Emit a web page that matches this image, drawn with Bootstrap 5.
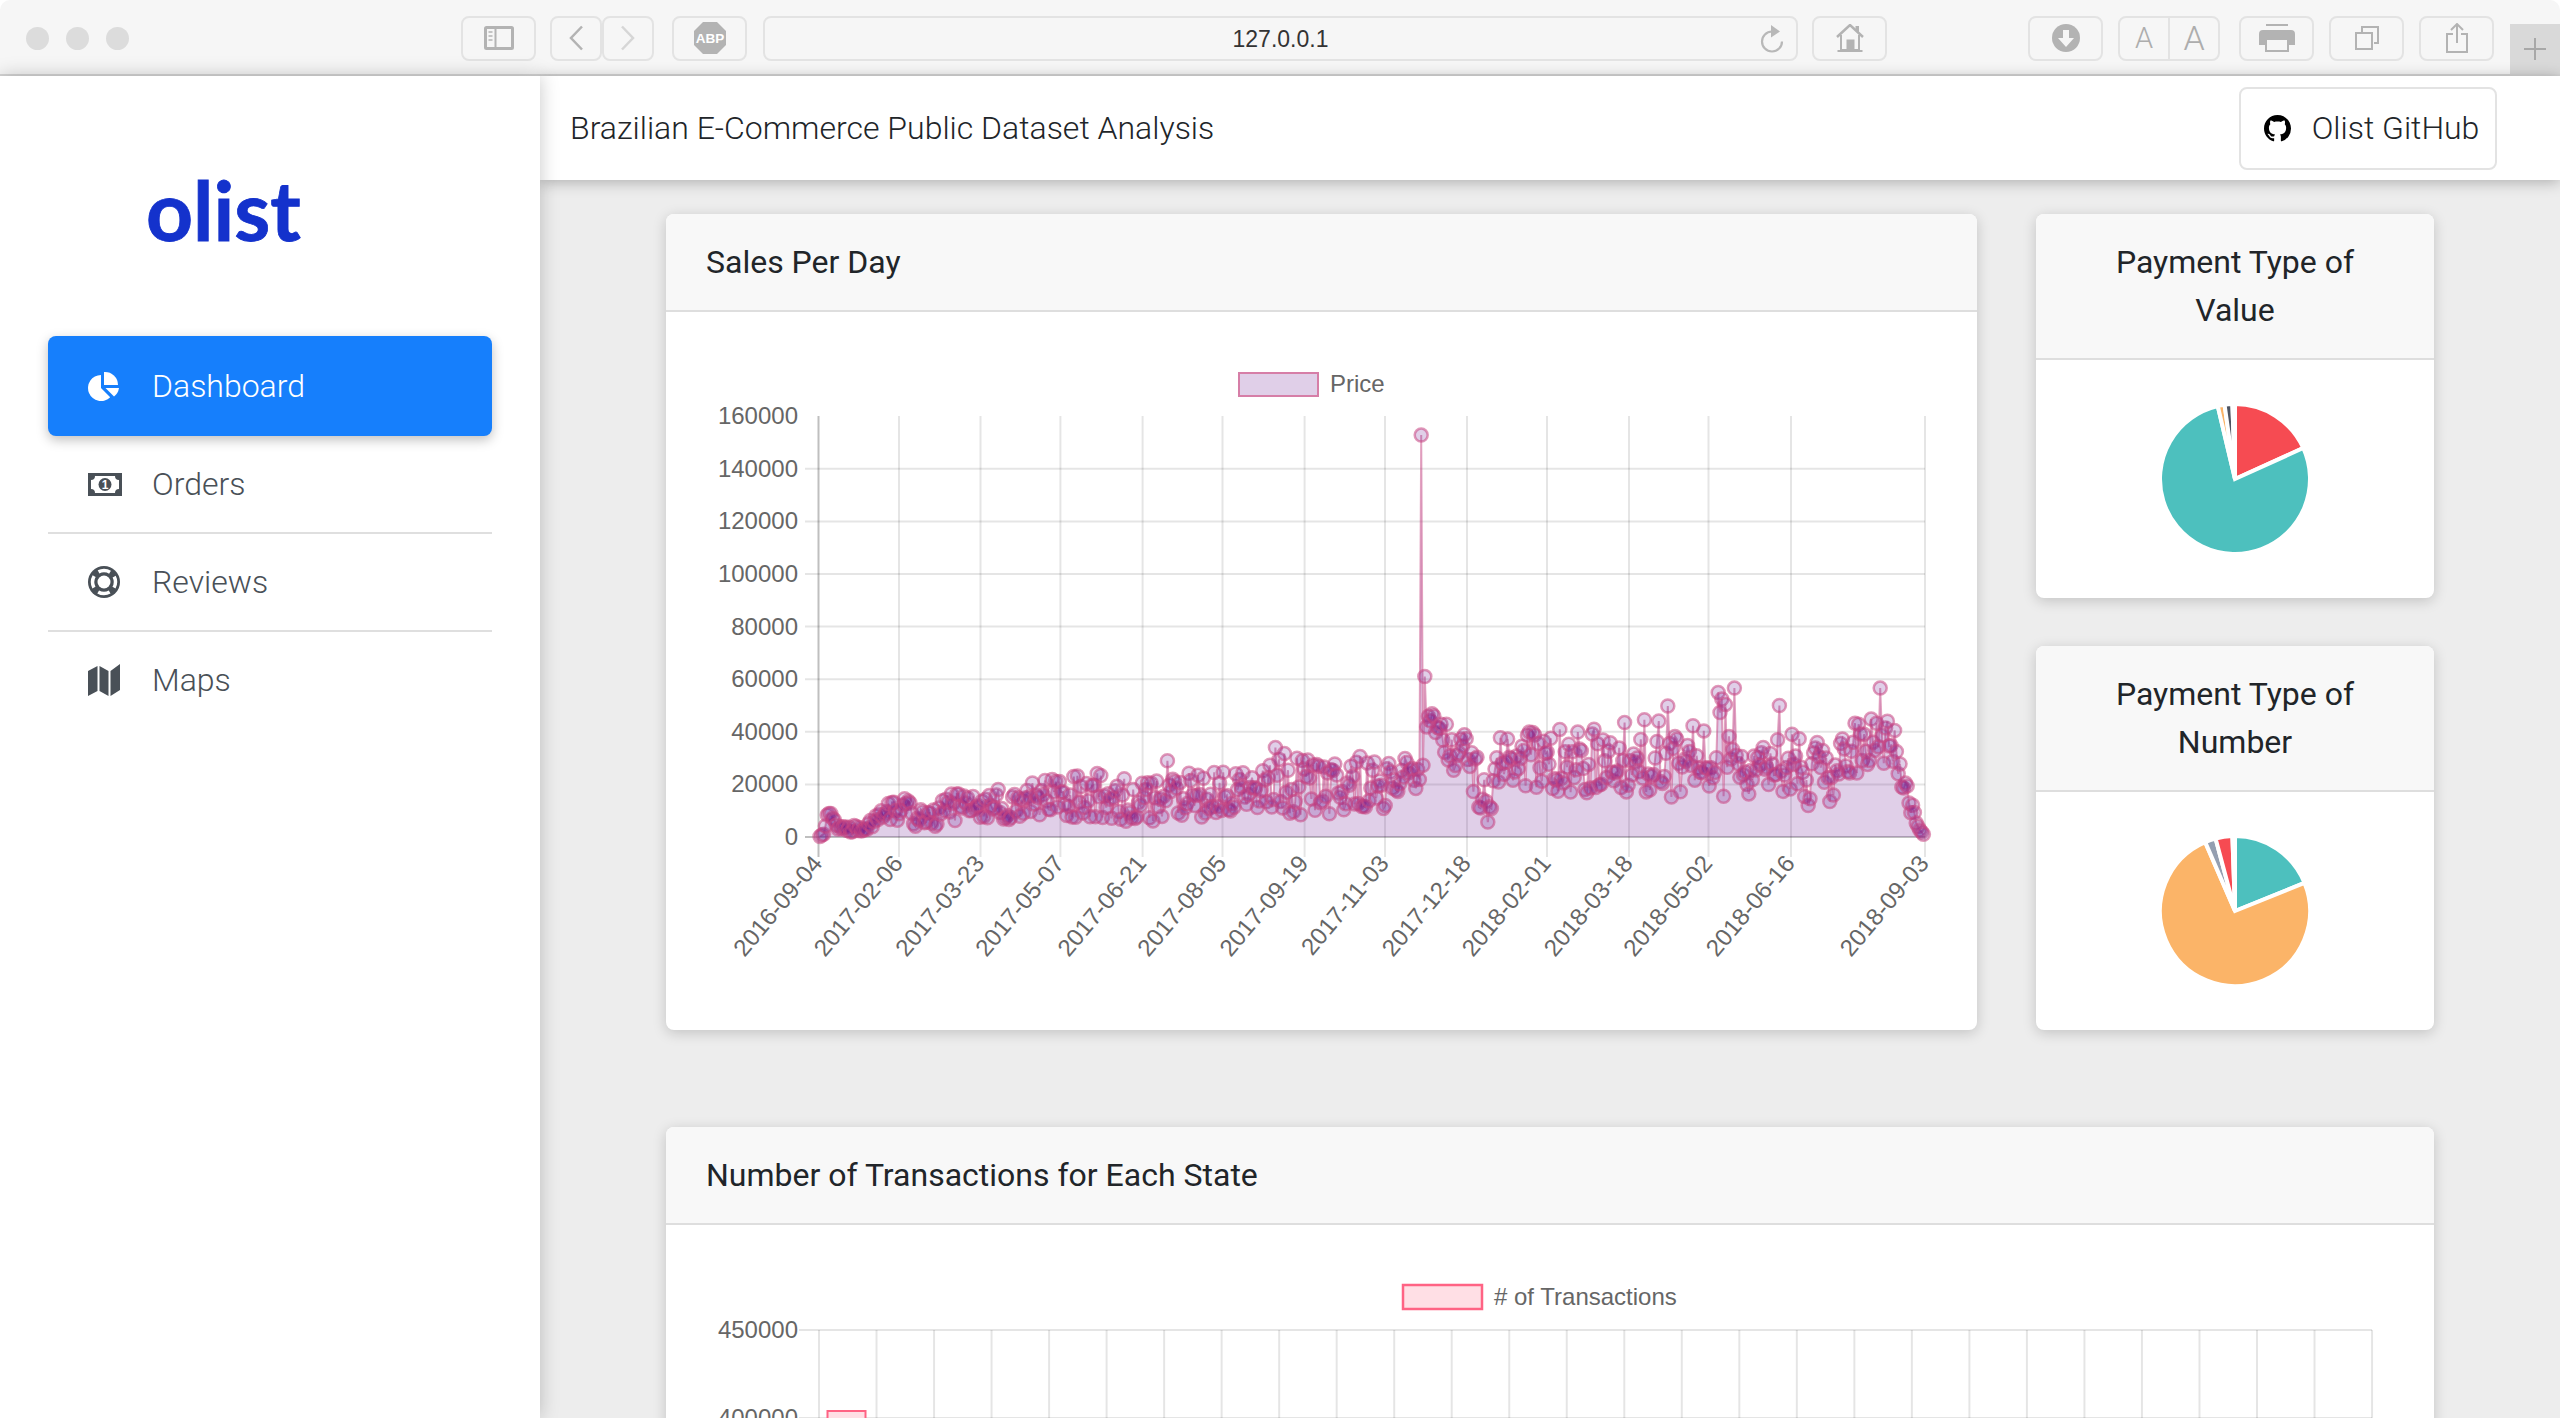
<!DOCTYPE html>
<html lang="en">
<head>
    <meta charset="UTF-8">
    <title>Olist Dashboard</title>
    <link href="https://cdn.jsdelivr.net/npm/bootstrap@5.3.3/dist/css/bootstrap.min.css" rel="stylesheet">
    <style>
        html, body { height: 100%; overflow: hidden; }
        body { background: #fff; font-family: Roboto, "Liberation Sans", sans-serif; color: #212529; }

        /* safari toolbar */
        .browser-bar { height: 76px; background: #f6f6f6; border-bottom: 2px solid #d6d6d6; border-radius: 10px 10px 0 0; padding-top: 2px; }
        .traffic { width: 23px; height: 23px; border-radius: 50%; background: #dcdcdc; margin-right: 17px; }
        .traffic:first-child { margin-left: 26px; }
        .tb-btn { width: 75px; height: 45px; border: 2px solid #e3e3e3; border-radius: 8px; flex: none; }
        .tb-nav { width: 52px; }
        .tb-aa { width: 102px; font-weight: 300; color: #adadad; }
        .tb-aa span { flex: 1; text-align: center; line-height: 41px; }
        .tb-aa span + span { border-left: 2px solid #e3e3e3; font-size: 34px; }
        .tb-aa span:first-child { font-size: 29px; }
        .tb-url { flex: 1; font: 23px "Liberation Sans", sans-serif; color: #333; padding-top: 2px; }
        .tb-reload { right: 12px; top: 7px; }
        .tb-plus { width: 50px; height: 50px; background: #d9d9d9; align-self: flex-end; flex: none; margin-left: 16px; }
        .ml-332 { margin-left: 315px; }
        .ml-14 { margin-left: 14px; }
        .ml-15 { margin-left: 15px; }
        .ml-16 { margin-left: 16px; }
        .ml-18 { margin-left: 18px; }
        .ml-19 { margin-left: 19px; }
        .ml-141 { margin-left: 141px; }

        /* sidebar */
        .app-wrap { height: calc(100% - 76px); }
        .side-panel { width: 540px; flex: none; background: #fff; box-shadow: 0 0 18px rgba(0, 0, 0, .22); z-index: 3; }
        .olist-logo { font: 700 82px/1 Lato, sans-serif; color: #1432cc; -webkit-text-stroke: .8px #1432cc; padding: 92px 0 0 146px; margin-bottom: 86px; }
        .side-nav { margin: 0 48px; }
        .side-nav .nav-link { height: 98px; padding: 0 0 0 40px; color: #495057; font-size: 32px; font-weight: 300; border-bottom: 2px solid #dfdfdf; }
        .side-nav .nav-item:last-child .nav-link { height: 96px; border-bottom: 0; }
        .side-nav .nav-link.active { height: 100px; background: #167ffc; color: #fff; border: 0; border-radius: 8px; box-shadow: 0 4px 12px rgba(0, 0, 0, .25); }
        .side-icon { width: 64px; flex: none; display: flex; align-items: center; }

        /* top bar */
        .main-area { min-width: 0; background: #ededed; }
        .top-bar { height: 104px; background: #fff; box-shadow: 0 2px 14px rgba(0, 0, 0, .28); padding: 0 63px 0 30px; z-index: 2; font-size: 32px; font-weight: 300; flex: none; }
        .github-btn { height: 83px; width: 258px; padding: 0 0 0 7px; border: 2px solid #e3e3e3; border-radius: 8px; font-size: 32px; font-weight: 300; color: #212529; gap: 21px; }

        /* cards */
        .content-area { padding: 34px 126px 0 126px; }
        .stat-card { border: 0; border-radius: 8px; box-shadow: 0 3px 14px rgba(0, 0, 0, .18); overflow: hidden; font-size: 32px; line-height: 48px; }
        .stat-card .card-header { padding: 24px 40px; background: #f8f8f8; border-bottom: 2px solid #dedede; border-radius: 0; }
        .stat-card .card-body { padding: 0; }
        .side-cards { width: 398px; flex: none; gap: 48px; }
        .main-row { gap: 59px; margin-bottom: 97px; }
        .stat-card svg { display: block; }
        .chart-label { font: 24px "Liberation Sans", sans-serif; fill: #666; }
    </style>
</head>
<body>

<div class="browser-bar d-flex align-items-center">
    <div class="traffic"></div>
    <div class="traffic"></div>
    <div class="traffic"></div>

    <div class="tb-btn ml-332 d-flex align-items-center justify-content-center">
        <svg width="30" height="24" viewBox="0 0 30 24"><rect x="1.5" y="1.5" width="27" height="21" fill="none" stroke="#b3b3b3" stroke-width="3" rx="1"/><path d="M11.5 1v22" stroke="#b3b3b3" stroke-width="2"/><path d="M4.5 6h4M4.5 10h4M4.5 14h4" stroke="#c4c4c4" stroke-width="2"/></svg>
    </div>
    <div class="tb-btn tb-nav ml-14 d-flex align-items-center justify-content-center">
        <svg width="16" height="26" viewBox="0 0 16 26"><path d="M14 1.5 3 13l11 11.5" fill="none" stroke="#b3b3b3" stroke-width="2.5"/></svg>
    </div>
    <div class="tb-btn tb-nav d-flex align-items-center justify-content-center">
        <svg width="16" height="26" viewBox="0 0 16 26"><path d="M2 1.5 13 13 2 24.500" fill="none" stroke="#d6d6d6" stroke-width="2.500"/></svg>
    </div>
    <div class="tb-btn ml-18 d-flex align-items-center justify-content-center">
        <svg width="34" height="34" viewBox="0 0 34 34"><path d="M10 1h14l9 9v14l-9 9H10l-9-9V10z" fill="#b3b3b3"/><text x="17" y="22" text-anchor="middle" font-family="Liberation Sans" font-weight="700" font-size="13.500" fill="#fff">ABP</text></svg>
    </div>
    <div class="tb-btn tb-url ml-16 position-relative d-flex align-items-center justify-content-center">
        127.0.0.1
        <svg class="tb-reload position-absolute" width="24" height="28" viewBox="0 0 24 28"><path d="M12 6.500a10 10 0 1 0 10 10" fill="none" stroke="#b8b8b8" stroke-width="2.200"/><path d="M11 0l9 6.500-9 6z" fill="#b8b8b8"/></svg>
    </div>
    <div class="tb-btn ml-14 d-flex align-items-center justify-content-center">
        <svg width="28" height="28" viewBox="0 0 28 28"><path d="M1 13 14 1l13 12" fill="none" stroke="#b3b3b3" stroke-width="2.500"/><path d="M19.500 2h3.500v7l-3.500-3z" fill="#b3b3b3"/><path d="M5 11v15h18V11" fill="none" stroke="#b3b3b3" stroke-width="2"/><path d="M10.500 15.500h8V26h-8z" fill="#b3b3b3"/><path d="M1.500 27h25" stroke="#b3b3b3" stroke-width="2"/></svg>
    </div>
    <div class="tb-btn ml-141 d-flex align-items-center justify-content-center">
        <svg width="28" height="28" viewBox="0 0 28 28"><circle cx="14" cy="14" r="14" fill="#b3b3b3"/><path d="M11 6h6v8h5l-8 9-8-9h5z" fill="#f6f6f6"/></svg>
    </div>
    <div class="tb-btn tb-aa ml-15 d-flex">
        <span>A</span><span>A</span>
    </div>
    <div class="tb-btn ml-19 d-flex align-items-center justify-content-center">
        <svg width="36" height="28" viewBox="0 0 36 28"><path d="M7 1h22" stroke="#b3b3b3" stroke-width="2"/><path d="M4 6h28a4 4 0 0 1 4 4v11h-7v-6H7v6H0V10a4 4 0 0 1 4-4z" fill="#b3b3b3"/><path d="M7 15h22v12H7z" fill="none" stroke="#b3b3b3" stroke-width="2"/></svg>
    </div>
    <div class="tb-btn ml-15 d-flex align-items-center justify-content-center">
        <svg width="24" height="24" viewBox="0 0 24 24"><path d="M1 7h16v16H1z" fill="none" stroke="#b3b3b3" stroke-width="2"/><path d="M7 6V1h16v16h-4" fill="none" stroke="#b3b3b3" stroke-width="2"/></svg>
    </div>
    <div class="tb-btn ml-15 d-flex align-items-center justify-content-center">
        <svg width="22" height="30" viewBox="0 0 22 30"><path d="M7 11H1v18h20V11h-6" fill="none" stroke="#b3b3b3" stroke-width="2"/><path d="M11 20V2M5 7l6-6 6 6" fill="none" stroke="#b3b3b3" stroke-width="2"/></svg>
    </div>
    <div class="tb-plus d-flex align-items-center justify-content-center">
        <svg width="24" height="24" viewBox="0 0 24 24"><path d="M12 1v22M1 12h22" stroke="#a8a8a8" stroke-width="2"/></svg>
    </div>
</div>

<div class="app-wrap d-flex">
    <div class="side-panel">
        <div class="olist-logo">olist</div>
        <ul class="nav flex-column side-nav">
            <li class="nav-item">
                <a class="nav-link active d-flex align-items-center" href="#">
                    <span class="side-icon"><svg width="32" height="30" viewBox="0 0 32 30" fill="#fff"><path d="M13 4v13l9.200 9.200A13 13 0 1 1 13 4z"/><path d="M16 1a13 13 0 0 1 14 13H16z"/><path d="M31 17a13 13 0 0 1-5 8.500L17.500 17z"/></svg></span>
                    Dashboard
                </a>
            </li>
            <li class="nav-item">
                <a class="nav-link d-flex align-items-center" href="#">
                    <span class="side-icon"><svg width="34" height="23" viewBox="0 0 34 23"><rect width="34" height="23" fill="#495057"/><path d="M7 3h20a4 4 0 0 0 4 4v9a4 4 0 0 0-4 4H7a4 4 0 0 0-4-4V7a4 4 0 0 0 4-4z" fill="#fff"/><circle cx="17" cy="11.500" r="6.500" fill="#495057"/><text x="17" y="16" text-anchor="middle" font-family="Liberation Sans" font-weight="700" font-size="12" fill="#fff">1</text></svg></span>
                    Orders
                </a>
            </li>
            <li class="nav-item">
                <a class="nav-link d-flex align-items-center" href="#">
                    <span class="side-icon"><svg width="32" height="32" viewBox="0 0 32 32"><circle cx="16" cy="16" r="16" fill="#495057"/><circle cx="16" cy="16" r="6.500" fill="#fff"/><circle cx="16" cy="16" r="11.500" fill="none" stroke="#fff" stroke-width="3.500" stroke-dasharray="12 6.060" stroke-dashoffset="6"/></svg></span>
                    Reviews
                </a>
            </li>
            <li class="nav-item">
                <a class="nav-link d-flex align-items-center" href="#">
                    <span class="side-icon"><svg width="32" height="32" viewBox="0 0 32 32" fill="#495057"><path d="M0 7l9.500-5v25L0 32zM11.500 2l9 5v25l-9-5zM22.500 7L32 0v26l-9.500 6z"/></svg></span>
                    Maps
                </a>
            </li>
        </ul>
    </div>

    <div class="main-area flex-grow-1 d-flex flex-column">
        <nav class="navbar top-bar">
            <span>Brazilian E-Commerce Public Dataset Analysis</span>
            <a class="btn github-btn d-flex align-items-center justify-content-center" href="#">
                <svg width="27" height="27" viewBox="0 0 16 16" fill="#000"><path d="M8 0C3.580 0 0 3.580 0 8c0 3.540 2.290 6.530 5.470 7.590.4.070.55-.17.55-.38 0-.19-.01-.82-.01-1.490-2.010.37-2.530-.49-2.690-.94-.09-.23-.48-.94-.82-1.130-.28-.15-.68-.52-.01-.53.63-.01 1.080.58 1.230.82.72 1.210 1.870.87 2.330.66.07-.52.28-.87.51-1.070-1.780-.2-3.640-.89-3.640-3.950 0-.87.31-1.590.82-2.150-.08-.2-.36-1.020.08-2.120 0 0 .67-.21 2.200.82.64-.18 1.320-.27 2-.27.68 0 1.360.09 2 .27 1.530-1.040 2.200-.82 2.200-.82.44 1.100.16 1.920.08 2.120.51.56.82 1.270.82 2.150 0 3.070-1.870 3.750-3.650 3.950.29.25.54.73.54 1.480 0 1.070-.01 1.930-.01 2.200 0 .21.15.46.55.38A8.013 8.013 0 0016 8c0-4.420-3.580-8-8-8z"/></svg>
                Olist GitHub
            </a>
        </nav>

        <div class="content-area">
            <div class="main-row d-flex">
                <div class="card stat-card flex-grow-1">
                    <div class="card-header">Sales Per Day</div>
                    <div class="card-body">
                        <svg id="salesChart" width="1311" height="716" viewBox="666 312 1311 716"></svg>
                    </div>
                </div>
                <div class="side-cards d-flex flex-column">
                    <div class="card stat-card">
                        <div class="card-header text-center">Payment Type of Value</div>
                        <div class="card-body">
                            <svg id="pieValue" width="398" height="238" viewBox="-199 -119 398 238"></svg>
                        </div>
                    </div>
                    <div class="card stat-card">
                        <div class="card-header text-center">Payment Type of Number</div>
                        <div class="card-body">
                            <svg id="pieNumber" width="398" height="238" viewBox="-199 -119 398 238"></svg>
                        </div>
                    </div>
                </div>
            </div>

            <div class="card stat-card">
                <div class="card-header">Number of Transactions for Each State</div>
                <div class="card-body">
                    <svg id="stateChart" width="1768" height="300" viewBox="666 1224 1768 300"></svg>
                </div>
            </div>
        </div>
    </div>
</div>

<script src="https://cdn.jsdelivr.net/npm/bootstrap@5.3.3/dist/js/bootstrap.bundle.min.js"></script>
<script>
    const GRID = 'rgba(0,0,0,.1)';
    const AXIS = 'rgba(0,0,0,.25)';

    // simple seeded random so the drawing stays the same on every run
    let seed = 4711;
    function rnd() {
        seed = (seed * 16807) % 2147483647;
        return seed / 2147483647;
    }

    // [x in px, middle value, spread]
    const shape = [[820,300,100],[824,1000,500],[828,9000,1500],[834,8000,1500],[838,2500,1500],[860,3000,2000],[872,5000,3000],
        [885,10000,4500],[905,11000,5000],[915,7000,3500],[935,7000,3500],[945,11000,5000],[990,13000,6000],[1020,12000,7000],
        [1060,16000,8000],[1100,15500,9000],[1140,13000,8000],[1180,15500,9000],[1260,18000,9000],[1270,20000,12000],[1320,20000,12000],
        [1380,20000,10000],[1415,23000,7000],[1420,28000,9000],[1430,46000,3000],[1450,35000,9000],[1470,28000,9000],[1480,19000,9000],
        [1488,11000,6000],[1491,15000,6000],[1493,25000,9000],[1500,32000,10000],[1550,29000,12000],[1600,28000,14000],[1640,31000,15000],
        [1690,31000,17000],[1725,34000,20000],[1735,28000,15000],[1745,18000,7000],[1755,25000,7000],[1780,27000,12000],[1790,28000,14000],
        [1810,22000,13000],[1830,25000,13000],[1850,33000,11000],[1880,38000,9000],[1895,32000,9000],[1902,24000,7000],[1910,12000,4000],
        [1918,5000,2000],[1925,200,100]];

    // points that stick out in the picture
    const peaks = {1422: 152800, 1424: 61000, 1668: 49800, 1718: 55000, 1734: 56600, 1780: 50000, 1881: 56600, 1276: 34000, 1168: 29000};

    function lookup(x) {
        for (let i = 1; i < shape.length; i++) {
            if (x <= shape[i][0]) {
                const a = shape[i - 1], b = shape[i];
                const t = (x - a[0]) / (b[0] - a[0]);
                return [a[1] + (b[1] - a[1]) * t, a[2] + (b[2] - a[2]) * t];
            }
        }
        return [0, 0];
    }

    function drawSales() {
        const base = 837, perUnit = 52.6 / 20000;
        const pts = [];
        for (let x = 820; x <= 1925; x += 1.8) {
            const [mid, spread] = lookup(x);
            let val = Math.max(0, mid + spread * (rnd() * 2 - 1));
            for (const px in peaks) {
                if (Math.abs(x - px) < 0.9) val = peaks[px];
            }
            pts.push([x, base - val * perUnit]);
        }

        let out = '';
        const yLabels = [160000, 140000, 120000, 100000, 80000, 60000, 40000, 20000, 0];
        yLabels.forEach(v => {
            const y = base - v * perUnit;
            if (v > 0 && v < 160000) out += `<path d="M805 ${y}H1925" stroke="${GRID}" stroke-width="2"/>`;
            out += `<text class="chart-label" x="798" y="${y + 8}" text-anchor="end">${v}</text>`;
        });
        out += `<path d="M805 ${base}H1925" stroke="${AXIS}" stroke-width="2"/>`;

        const ticks = [[818.5,'2016-09-04'],[899,'2017-02-06'],[980.5,'2017-03-23'],[1060.4,'2017-05-07'],[1142.6,'2017-06-21'],
            [1222.5,'2017-08-05'],[1304.6,'2017-09-19'],[1385,'2017-11-03'],[1467,'2017-12-18'],[1547,'2018-02-01'],
            [1629,'2018-03-18'],[1708.5,'2018-05-02'],[1791,'2018-06-16'],[1925,'2018-09-03']];
        ticks.forEach(([x, label], i) => {
            out += `<path d="M${x} 416V857" stroke="${i === 0 ? AXIS : GRID}" stroke-width="2"/>`;
            out += `<text class="chart-label" text-anchor="end" transform="translate(${x + 5} 864) rotate(-50)">${label}</text>`;
        });

        // legend
        out += `<rect x="1239" y="373" width="79" height="23" fill="rgba(102,16,142,.2)" stroke="#d67ea7" stroke-width="2"/>`;
        out += `<text class="chart-label" x="1330" y="392">Price</text>`;

        // area, line, points
        const line = pts.map(p => p[0].toFixed(1) + ' ' + p[1].toFixed(1)).join('L');
        out += `<path d="M${line}L1925 ${base}L820 ${base}Z" fill="rgba(102,16,142,.2)"/>`;
        out += `<path d="M${line}" fill="none" stroke="rgba(200,70,130,.5)" stroke-width="2"/>`;
        pts.forEach(p => {
            out += `<circle cx="${p[0].toFixed(1)}" cy="${p[1].toFixed(1)}" r="6.500" fill="rgba(102,16,142,.2)" stroke="rgba(200,70,130,.55)" stroke-width="2.500"/>`;
        });
        document.getElementById('salesChart').innerHTML = out;
    }

    function drawPie(id, slices) {
        const r = 75;
        let out = '';
        slices.forEach(([from, to, color]) => {
            const a = (from - 90) * Math.PI / 180, b = (to - 90) * Math.PI / 180;
            const large = to - from > 180 ? 1 : 0;
            out += `<path d="M0 0L${r * Math.cos(a)} ${r * Math.sin(a)}A${r} ${r} 0 ${large} 1 ${r * Math.cos(b)} ${r * Math.sin(b)}Z" fill="${color}" stroke="#fff" stroke-width="4"/>`;
        });
        document.getElementById(id).innerHTML = out;
    }

    function drawStates() {
        let out = '';
        [[450000, 1329], [400000, 1417]].forEach(([v, y]) => {
            out += `<path d="M799 ${y}H2372" stroke="${GRID}" stroke-width="2"/>`;
            out += `<text class="chart-label" x="798" y="${y + 8}" text-anchor="end">${v}</text>`;
        });
        for (let i = 0; i <= 27; i++) {
            const x = 819 + i * 57.52;
            out += `<path d="M${x} 1329V1524" stroke="${GRID}" stroke-width="2"/>`;
        }
        out += `<rect x="827.500" y="1410" width="38" height="114" fill="#ffdfe5" stroke="#ff6384" stroke-width="2"/>`;
        out += `<rect x="1403" y="1284" width="79" height="24" fill="#ffdfe5" stroke="#ff6384" stroke-width="2.500"/>`;
        out += `<text class="chart-label" x="1494" y="1304">${'# of Transactions'}</text>`;
        document.getElementById('stateChart').innerHTML = out;
    }

    drawSales();
    drawPie('pieValue', [[0, 65.6, '#F64B52'], [65.6, 346.7, '#4DC0BE'], [346.7, 352, '#FBB468'], [352, 358, '#4D5360'], [358, 360, '#949FB1']]);
    drawPie('pieNumber', [[0, 68, '#4DC0BE'], [68, 336.6, '#FBB468'], [336.6, 345, '#949FB1'], [345, 358, '#F64B52'], [358, 360, '#4D5360']]);
    drawStates();
</script>

</body>
</html>
